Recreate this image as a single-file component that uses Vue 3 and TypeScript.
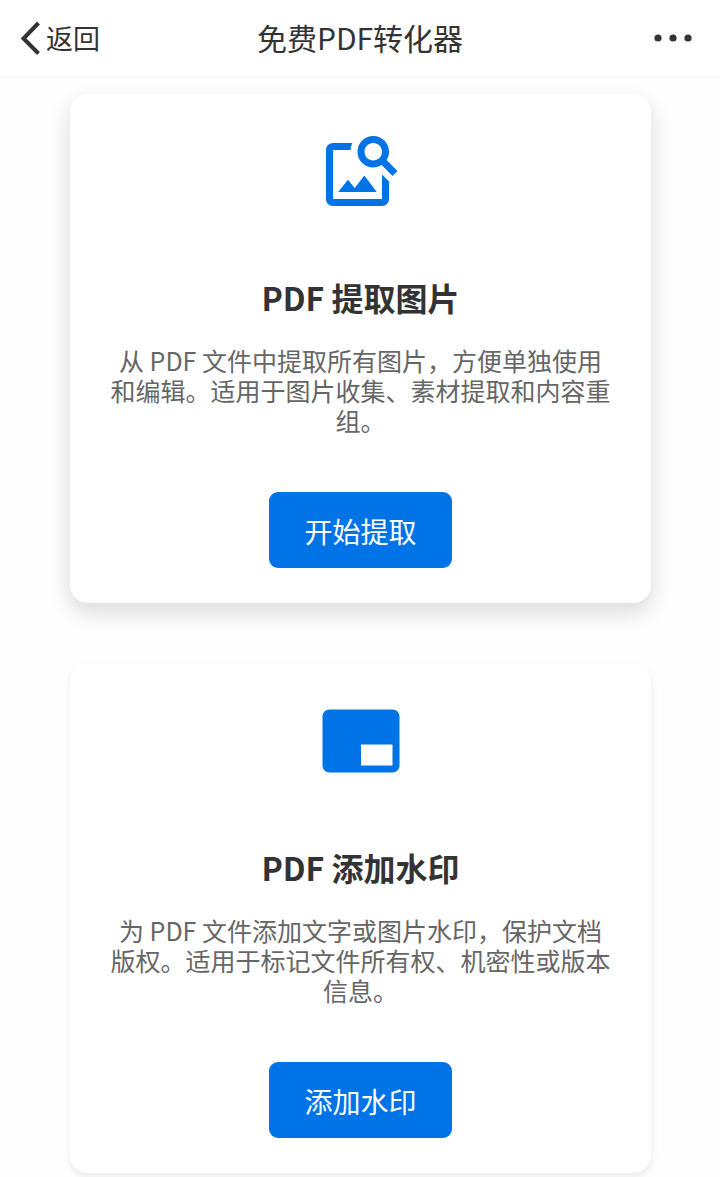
<script setup lang="ts">
interface Tool {
  id: string
  title: string
  description: string
  action: string
  icon: string
  raised: boolean
}

const tools: Tool[] = [
  {
    id: 'extract',
    title: 'PDF 提取图片',
    description: '从 PDF 文件中提取所有图片，方便单独使用和编辑。适用于图片收集、素材提取和内容重组。',
    action: '开始提取',
    icon: 'M18 13v7H4V6h5.02c.05-.71.22-1.38.48-2H4c-1.1 0-2 .9-2 2v14c0 1.1.9 2 2 2h14c1.1 0 2-.9 2-2v-5l-2-2zm-1.5 5h-11l2.75-3.53 1.96 2.36 2.75-3.54L16.5 18zm2.8-9.11c.44-.7.7-1.51.7-2.39C20 4.01 17.99 2 15.5 2S11 4.01 11 6.5s2.01 4.5 4.49 4.5c.88 0 1.7-.26 2.39-.7L21 13.42 22.42 12 19.3 8.89zM15.5 9C14.12 9 13 7.88 13 6.5S14.12 4 15.5 4 18 5.12 18 6.5 16.88 9 15.5 9z',
    raised: true,
  },
  {
    id: 'watermark',
    title: 'PDF 添加水印',
    description: '为 PDF 文件添加文字或图片水印，保护文档版权。适用于标记文件所有权、机密性或版本信息。',
    action: '添加水印',
    icon: 'M21 3H3c-1.1 0-2 .9-2 2v14c0 1.1.9 2 2 2h18c1.1 0 2-.9 2-2V5c0-1.1-.9-2-2-2zm0 16h-9v-6h9v6z',
    raised: false,
  },
]
</script>

<template>
  <div class="page">
    <header class="bar">
      <button class="back" type="button">
        <svg class="chevron" viewBox="0 0 20 36" aria-hidden="true">
          <path d="M18.5 3 3.5 18.5l15 15" fill="none" stroke="currentColor" stroke-width="4" />
        </svg>
        <span>返回</span>
      </button>
      <h1 class="heading">免费PDF转化器</h1>
      <button class="more" type="button" aria-label="更多">
        <svg class="dots" viewBox="0 0 38 8" aria-hidden="true">
          <circle cx="4" cy="4" r="3.6" />
          <circle cx="19" cy="4" r="3.6" />
          <circle cx="34" cy="4" r="3.6" />
        </svg>
      </button>
    </header>
    <main class="list">
      <article v-for="tool in tools" :key="tool.id" class="card" :class="{ raised: tool.raised }">
        <svg class="icon" viewBox="0 0 24 24" aria-hidden="true"><path :d="tool.icon" /></svg>
        <h2 class="title">{{ tool.title }}</h2>
        <p class="description">{{ tool.description }}</p>
        <button class="action" type="button">{{ tool.action }}</button>
      </article>
    </main>
  </div>
</template>

<style>
body {
  margin: 0;
  background: #fefefe;
}
</style>

<style scoped>
.page {
  font-family: "Noto Sans CJK SC", sans-serif;
  color: #333;
}
.bar {
  display: grid;
  grid-template-columns: 1fr auto 1fr;
  align-items: center;
  height: 76px;
  padding: 0 20px;
  border-bottom: 1px solid #f3f3f3;
  background: #fff;
}
button {
  border: 0;
  font-family: inherit;
  cursor: pointer;
}
.back {
  display: flex;
  align-items: center;
  gap: 6px;
  justify-self: start;
  padding: 0;
  background: none;
  color: #333;
  font-size: 27px;
  line-height: 40px;
}
.chevron {
  width: 20px;
  height: 36px;
}
.heading {
  margin: 0;
  padding-bottom: 2px;
  font-size: 30px;
  font-weight: 400;
  line-height: 44px;
}
.more {
  display: flex;
  align-items: center;
  justify-self: end;
  height: 44px;
  padding: 0 8px;
  background: none;
  color: #333;
}
.dots {
  width: 38px;
  height: 8px;
  fill: currentColor;
}
.list {
  display: flex;
  flex-direction: column;
  gap: 61px;
  padding: 17px 69px 4px 70px;
}
.card {
  display: flex;
  flex-direction: column;
  align-items: center;
  padding: 35px 38px;
  border-radius: 18px;
  background: #fff;
  box-shadow: 0 4px 8px rgba(0, 0, 0, 0.08);
  text-align: center;
}
.card.raised {
  box-shadow: 0 9px 22px rgba(0, 0, 0, 0.15);
}
.icon {
  width: 84px;
  height: 84px;
  fill: #0073e6;
}
.title {
  margin: 64px 0 28px;
  font-size: 32px;
  font-weight: 700;
  line-height: 40px;
}
.description {
  margin: 0 0 57px;
  color: #666;
  font-size: 25px;
  line-height: 30px;
}
.action {
  padding: 19px 35px 17px;
  border-radius: 9px;
  background: #0073e6;
  color: #fff;
  font-size: 28px;
  line-height: 40px;
}
</style>
